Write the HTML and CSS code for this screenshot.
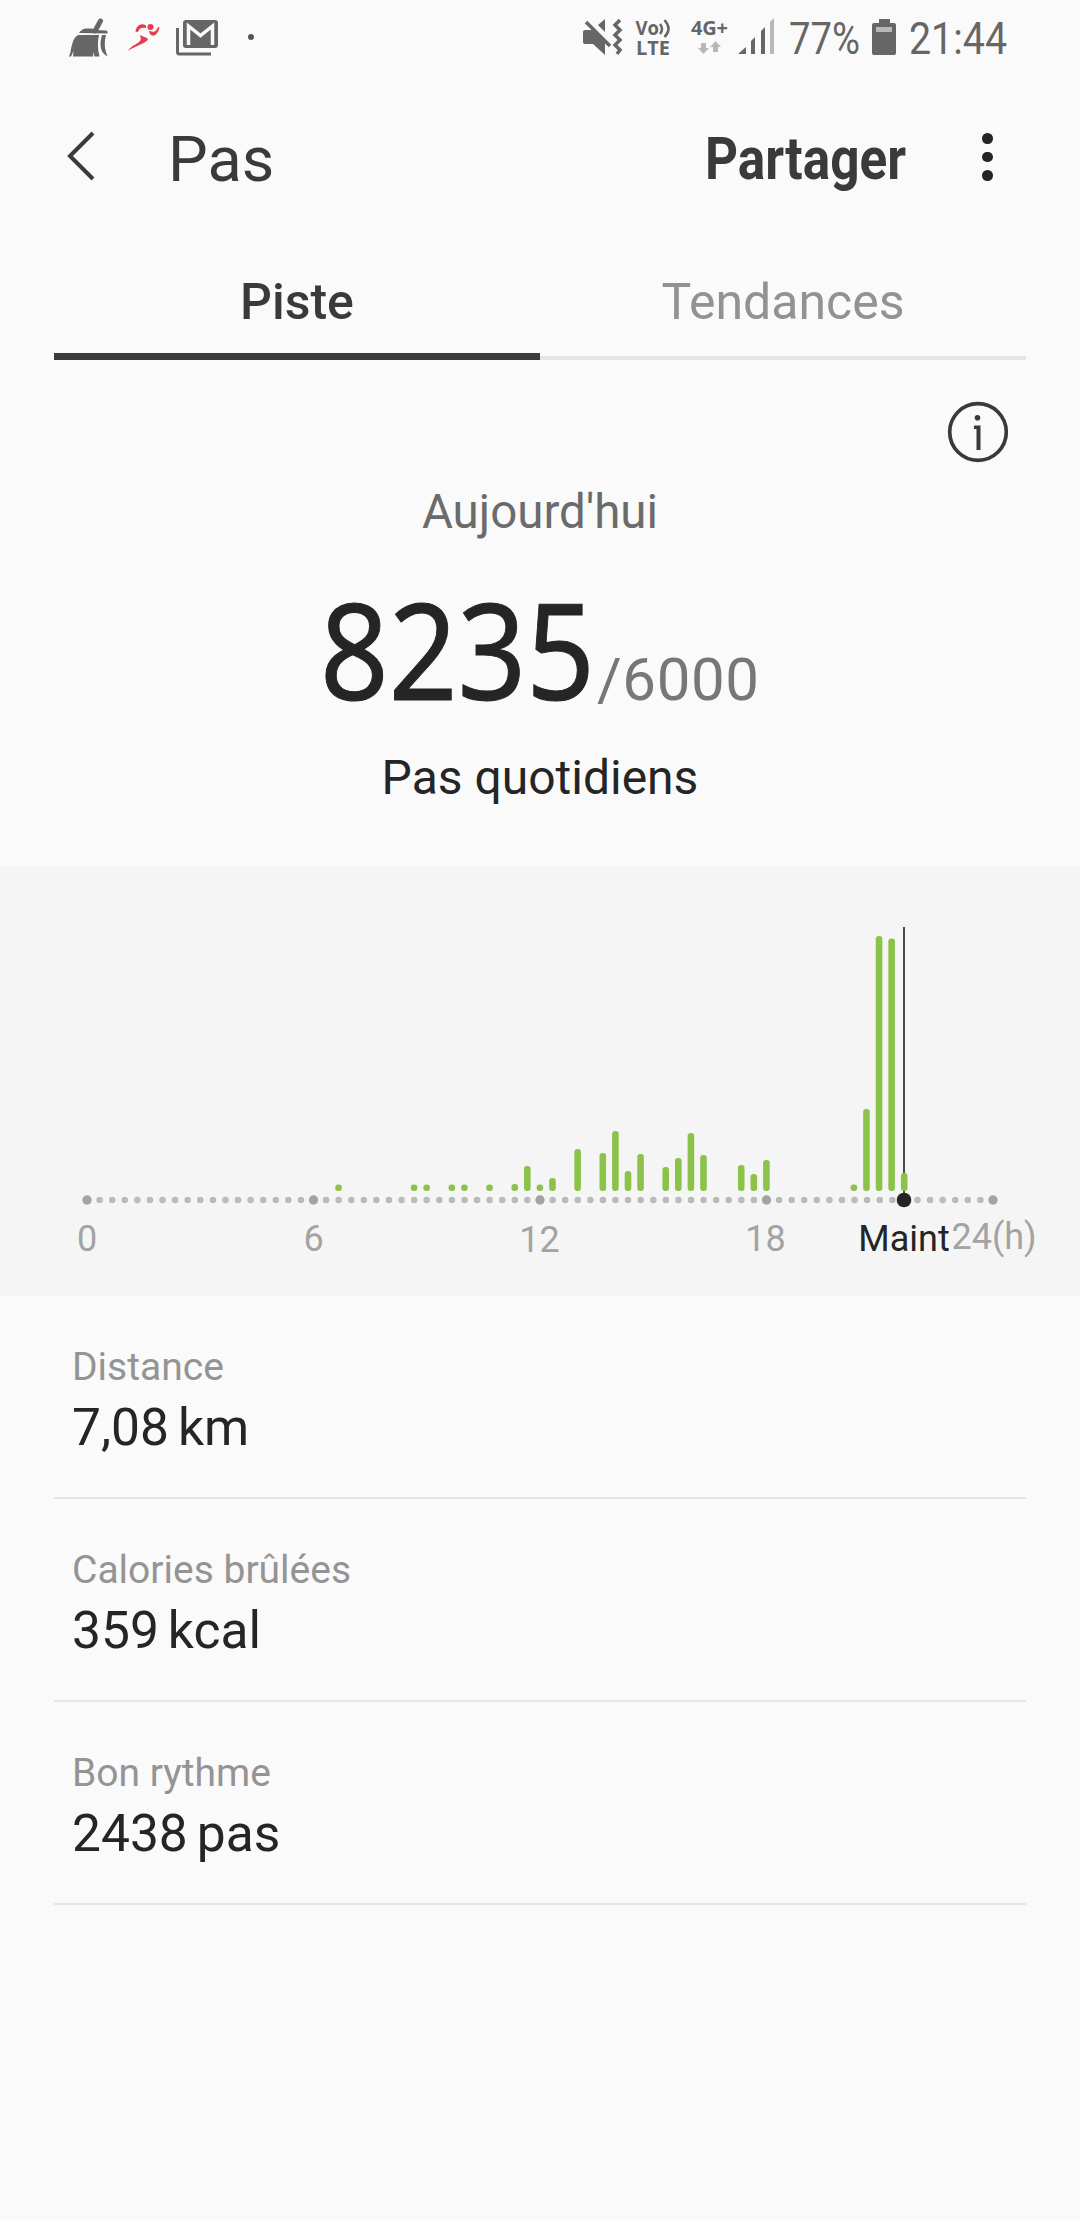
FILE: index.html
```html
<!DOCTYPE html>
<html lang="fr">

<head>
  <meta charset="UTF-8">
  <meta name="viewport" content="width=device-width, initial-scale=1.0">
  <title>Pas</title>
  <link rel="stylesheet" href="styles.css">
</head>

<body>

  <div class="status-bar">
    <div class="status-left">
      <!-- cleaner -->
      <svg class="icon-broom" width="40" height="40" viewBox="0 0 40 40">
        <path d="M31.500 3L26 13" stroke="#666" stroke-width="5" stroke-linecap="round" />
        <path d="M10 15q3-4.500 7-4.500h6l3 1.500 11 .5q2 0 1.500 3z" />
        <path d="M9 17h21c-1.500 7-1.500 14 .5 21.500h-5L24.500 34l-.5 4.500H4L4.500 33 2 38.500H0c2-4 1.500-8 3.500-13.500 1-3 2-6 5.500-8z" />
        <path d="M33 17h4c-2 8-1.500 14 1.500 21-4-1-7-6-7-12 0-3 .5-6 1.500-9z" />
      </svg>
      <!-- runner -->
      <svg class="icon-runner" width="34" height="30" viewBox="0 0 34 30">
        <circle cx="22.500" cy="4" r="3" />
        <path d="M18 2.500C13-1 8 3 7.500 8.500L10 9c1-3.500 3.500-5 8-4zM21 8c1 6.500 8 7 10.500-3.500L30 4c-1.500 4-3.500 5.500-6 4.500zM11.500 12l7.500 3q2 1.500-1 3.500C13 22 7 23 0 28c4-6 8-6 11.500-9.500 1.500-1.500 2-3 0-6.500z" />
      </svg>
      <!-- mail -->
      <svg class="icon-mail" width="42" height="36" viewBox="0 0 42 36">
        <path d="M1.500 8v24q0 2 2 2H35" fill="none" stroke="#666" stroke-width="3" />
        <rect x="7" y="0" width="35" height="28" rx="3" />
        <path d="M12.500 25V6l12 9.500L36.500 6v19" fill="none" stroke="#fafafa" stroke-width="3.500" />
      </svg>
      <span class="more-dot"></span>
    </div>

    <svg class="status-right" width="450" height="80" viewBox="0 0 450 80">
      <!-- muted speaker with vibration -->
      <path d="M24 30h8L44 42v13L32 44h-8q-2 0-2-2V32q0-2 2-2zM37 25l7-6v13z" />
      <path d="M25 22l24 24" stroke="#666" stroke-width="3.500" />
      <path d="M59 20l-5 5 5 5-5 5 5 5-5 5 5 5-3 4" fill="none" stroke="#666" stroke-width="3.500" />
      <text class="net" x="74.500" y="34.500" textLength="23.500" lengthAdjust="spacingAndGlyphs">Vo</text>
      <path d="M99 24q4 5 0 10M103.500 20q8 9 0 17" fill="none" stroke="#666" stroke-width="2.500" />
      <text class="net" x="75" y="54.500" textLength="34" lengthAdjust="spacingAndGlyphs">LTE</text>
      <text class="net" x="130" y="35" textLength="37">4G+</text>
      <path class="pale" d="M140 43h5v5h3l-5.500 6-5.500-6h3zM152 52v-5h-3l5.500-6 5.500 6h-3v5z" />
      <path d="M177 54l8-7v7zM190 54V41l4-4v17zM200 54V31l4-4v27z" />
      <path class="pale" d="M209 54V22l4-4v36z" />
      <text class="clock" x="228" y="54" textLength="71" lengthAdjust="spacingAndGlyphs">77%</text>
      <path d="M318 19h11v4h4q2 0 2 2v28q0 2-2 2h-20q-2 0-2-2V25q0-2 2-2h5z" />
      <rect class="pale" x="315" y="27" width="16" height="5" />
      <text class="clock" x="348" y="54" textLength="98" lengthAdjust="spacingAndGlyphs">21:44</text>
    </svg>
  </div>

  <div class="app-bar">
    <svg class="back" width="30" height="50" viewBox="0 0 30 50">
      <path d="M27 2L4 25l23 23" />
    </svg>
    <h1>Pas</h1>
    <svg class="share" width="204" height="80" viewBox="0 0 204 80">
      <text x="1" y="59" textLength="201" lengthAdjust="spacingAndGlyphs">Partager</text>
    </svg>
    <div class="menu"><span></span><span></span><span></span></div>
  </div>

  <div class="tabs">
    <div class="tab active">Piste</div>
    <div class="tab">Tendances</div>
  </div>

  <div class="summary">
    <svg class="info" width="62" height="62" viewBox="0 0 62 62">
      <circle cx="31" cy="31" r="28.300" fill="none" stroke="#3a3a3a" stroke-width="3.700" />
      <circle cx="30.500" cy="16.700" r="2.800" />
      <path d="M27 24.500h6.500V49h-4V28H27z" />
    </svg>
    <div class="day">Aujourd'hui</div>
    <svg class="steps" width="440" height="170" viewBox="0 0 440 170">
      <text class="count" x="0" y="150" textLength="275" lengthAdjust="spacingAndGlyphs">8235</text>
      <text class="goal" x="277" y="150" textLength="162">/6000</text>
    </svg>
    <div class="caption">Pas quotidiens</div>
  </div>

  <div class="chart">
    <svg width="1080" height="430" viewBox="0 866 1080 430">
      <path class="dots" d="M87 1200H994" />
      <g class="hours">
        <circle cx="87" cy="1200" r="4.700" />
        <circle cx="313.500" cy="1200" r="4.700" />
        <circle cx="540" cy="1200" r="4.700" />
        <circle cx="766.500" cy="1200" r="4.700" />
        <circle cx="993" cy="1200" r="4.700" />
      </g>
      <path class="now" d="M904 927V1200" />
      <g id="bars"></g>
      <circle class="now-dot" cx="904" cy="1200" r="7.300" />
      <text x="87" y="1251">0</text>
      <text x="313.500" y="1251">6</text>
      <text x="539.500" y="1252">12</text>
      <text x="765.500" y="1251">18</text>
      <text x="994" y="1249">24(h)</text>
      <text class="now-label" x="904" y="1251">Maint</text>
    </svg>
  </div>

  <div class="details">
    <div class="row">
      <div class="label">Distance</div>
      <div class="value">7,08<span>km</span></div>
    </div>
    <div class="row">
      <div class="label">Calories brûlées</div>
      <div class="value">359<span>kcal</span></div>
    </div>
    <div class="row">
      <div class="label">Bon rythme</div>
      <div class="value">2438<span>pas</span></div>
    </div>
  </div>

  <script>
    // [20 minute slot, bar height]
    const steps = [
      [20, 6.5], [26, 6.5], [27, 6.5], [29, 6.5], [30, 6.5], [32, 6.5], [34, 7],
      [35, 25], [36, 6.5], [37, 13], [39, 42], [41, 38], [42, 60], [43, 20],
      [44, 37], [46, 24], [47, 33], [48, 58], [49, 36], [52, 26], [53, 17],
      [54, 31], [61, 6.5], [62, 82], [63, 255], [64, 252.5], [65, 18]
    ];

    let bars = '';
    for (const [slot, height] of steps) {
      const x = 87 + slot * 906 / 72 - 3.4 - (slot > 60 ? 0.6 : 0);
      bars += `<rect x="${x}" y="${1191 - height}" width="6.6" height="${height}" rx="3" />`;
    }
    document.getElementById('bars').innerHTML = bars;
  </script>

</body>

</html>
```
FILE: styles.css
```css
* {
  margin: 0;
  padding: 0;
  box-sizing: border-box;
}

body {
  width: 1080px;
  height: 2220px;
  background-color: #fafafa;
  font-family: Roboto, sans-serif;
  color: #252525;
  overflow: hidden;
}

svg {
  display: block;
  flex: none;
  overflow: visible;
}

.status-bar {
  display: flex;
  justify-content: space-between;
  height: 80px;
  padding-left: 69px;
  padding-right: 70px;
  fill: #666;
}

.status-left {
  display: flex;
  align-items: flex-start;
  padding-top: 18px;
}

.status-right {
  margin-right: -1px;
}

.icon-runner {
  margin: 5px 0 0 19px;
  fill: #e43d50;
}

.icon-mail {
  margin: 2px 0 0 14px;
}

.more-dot {
  width: 6px;
  height: 6px;
  margin: 16px 0 0 30px;
  border-radius: 50%;
  background-color: #555;
}

.pale {
  fill: #b8b8b8;
}

.net {
  font-family: "Open Sans", sans-serif;
  font-size: 20px;
  font-weight: 700;
}

.clock {
  font-size: 45px;
}

.app-bar {
  display: flex;
  height: 168px;
  padding-left: 66px;
  color: #3a3a3a;
}

.back {
  margin-top: 51px;
  fill: none;
  stroke: #3a3a3a;
  stroke-width: 4;
}

.app-bar h1 {
  width: 536px;
  margin: 43px 0 0 72px;
  font-size: 63px;
  font-weight: 400;
  line-height: 74px;
}

.share {
  margin-top: 40px;
  font-size: 59px;
  font-weight: 700;
  fill: #3a3a3a;
}

.menu {
  display: flex;
  flex-direction: column;
  gap: 8px;
  margin: 53px 0 0 74px;
}

.menu span {
  width: 10.500px;
  height: 10.500px;
  border-radius: 50%;
  background-color: #252525;
}

.tabs {
  display: flex;
  align-items: flex-end;
  height: 112px;
  margin: 0 54px;
}

.tab {
  flex: 1;
  height: 100px;
  border-bottom: 4px solid #e5e5e5;
  font-size: 50px;
  line-height: 85px;
  text-align: center;
  color: #929292;
}

.tab.active {
  border-bottom: 7px solid #3a3a3a;
  font-weight: 500;
  color: #3a3a3a;
}

.summary {
  display: flex;
  flex-direction: column;
  align-items: center;
  height: 506px;
  padding-top: 41px;
}

.info {
  align-self: flex-end;
  margin-right: 71px;
  fill: #3a3a3a;
}

.day {
  margin-top: 21px;
  font-size: 47.500px;
  line-height: 56px;
  color: #6b6b6b;
}

.steps {
  margin-top: 10px;
}

.count {
  font-family: "Noto Sans", sans-serif;
  font-size: 134px;
  font-weight: 400;
  fill: #252525;
  stroke: #252525;
  stroke-width: 1;
}

.goal {
  font-size: 60px;
  fill: #777;
}

.caption {
  margin-top: 30px;
  font-size: 48px;
  line-height: 56px;
}

.chart {
  height: 430px;
  background-color: #f5f5f5;
}

.chart text {
  font-size: 36px;
  text-anchor: middle;
  fill: #a3a3a3;
}

.chart .now-label {
  fill: #252525;
}

.dots {
  fill: none;
  stroke: #bbb;
  stroke-width: 6.500;
  stroke-linecap: round;
  stroke-dasharray: 0 12.5833;
}

.hours {
  fill: #a3a3a3;
}

.now {
  stroke: #4a4a4a;
  stroke-width: 2;
}

.now-dot {
  fill: #252525;
}

#bars {
  fill: #8bc34a;
}

.details {
  margin: 0 54px;
}

.row {
  height: 203px;
  padding: 48px 18px 0;
  border-bottom: 2px solid #e6e6e6;
}

.label {
  font-size: 39px;
  line-height: 46px;
  color: #949494;
}

.value {
  margin-top: 8px;
  font-size: 51.500px;
  line-height: 60px;
}

.value span {
  margin-left: 9px;
}
```
